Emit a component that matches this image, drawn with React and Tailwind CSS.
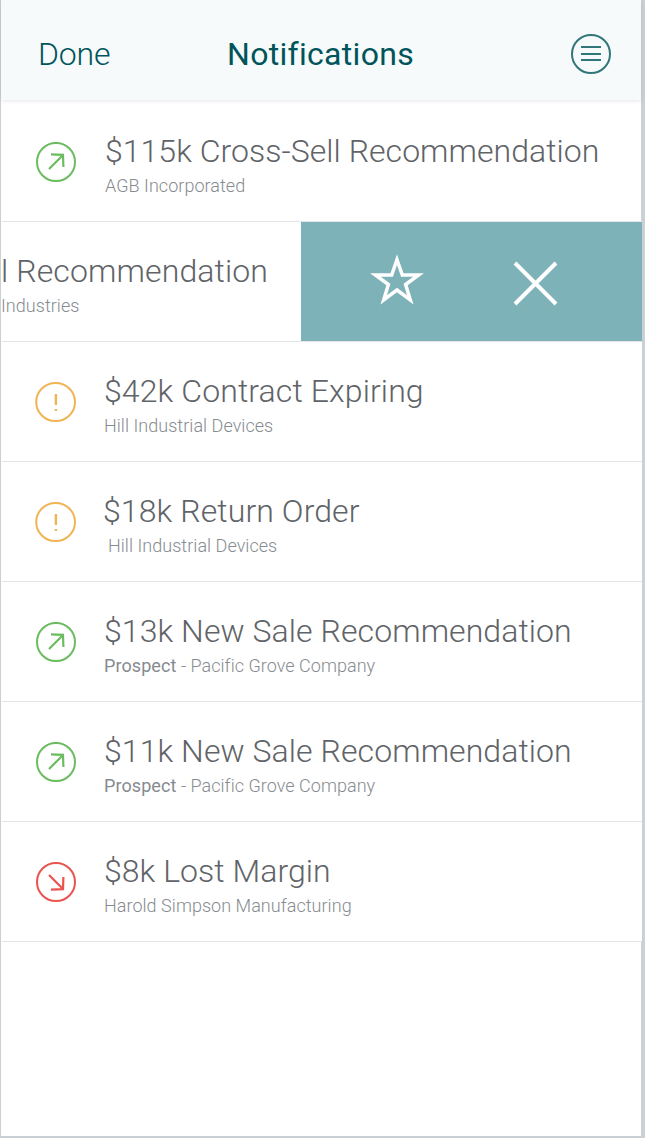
import React from "react";

const rows = [
  { icon: "up", title: "$115k Cross-Sell Recommendation", sub: "AGB Incorporated", pad: "pl-[103px]", track: "tracking-[0.04px]", bg: "bg-transparent" },
  { swiped: true, title: "l Recommendation", sub: "Industries", track: "tracking-[0.12px]" },
  { icon: "alert", title: "$42k Contract Expiring", sub: "Hill Industrial Devices", pad: "pl-[102px]", track: "tracking-[0.11px]" },
  { icon: "alert", title: "$18k Return Order", sub: "Hill Industrial Devices", pad: "pl-[101px]", subPad: "pl-[5px]", track: "tracking-[0.1px]" },
  { icon: "up", title: "$13k New Sale Recommendation", strong: "Prospect", sub: " - Pacific Grove Company", pad: "pl-[102px]", track: "tracking-[0.07px]" },
  { icon: "up", title: "$11k New Sale Recommendation", strong: "Prospect", sub: " - Pacific Grove Company", pad: "pl-[102px]", track: "tracking-[0.07px]" },
  { icon: "down", title: "$8k Lost Margin", sub: "Harold Simpson Manufacturing", pad: "pl-[102px]", track: "tracking-[0.05px]" },
];

function StatusIcon({ kind }) {
  if (kind === "alert") {
    return (
      <svg className="h-[42px] w-[42px] text-[#f0b454]" viewBox="0 0 42 42" fill="none" stroke="currentColor" strokeWidth="2">
        <ellipse cx="20.6" cy="21" rx="19.4" ry="19" />
        <path d="M20.9 13v11M20.9 28v2" strokeWidth="2.4" />
      </svg>
    );
  }
  const color = kind === "up" ? "text-[#6cbb61]" : "text-[#ea5450]";
  return (
    <svg className={`h-[42px] w-[42px] ${color}`} viewBox="0 0 42 42" fill="none" stroke="currentColor" strokeWidth="2">
      <circle cx="21" cy="21" r="19" />
      {kind === "up" ? (
        <path d="M14 28 27.8 14.2M16 13.3l12 .5.4 12.2" strokeWidth="2.2" />
      ) : (
        <path d="M14 14 27.8 27.8M16 28.7l12-.5.4-12.2" strokeWidth="2.2" />
      )}
    </svg>
  );
}

function Texts({ row }) {
  return (
    <div className="flex flex-col whitespace-pre pt-[29px]">
      <div className={`h-10 text-[32px] leading-10 font-light text-[#606367] ${row.track}`}>{row.title}</div>
      <div className={`mt-[3px] h-6 text-[18px] leading-6 font-light tracking-[0.04px] text-[#868b8f] ${row.subPad || ""}`}>
        {row.strong && <span className="font-normal tracking-[0.08px]">{row.strong}</span>}
        {row.sub}
      </div>
    </div>
  );
}

function Row({ row }) {
  if (row.swiped) {
    return (
      <li className="ml-px flex h-[120px] w-[640px] border-b border-[#e2e4e5] bg-white">
        <div className="w-[299px] overflow-hidden">
          <div className="-ml-px">
            <Texts row={row} />
          </div>
        </div>
        <div className="flex flex-1 bg-[#7db2b8]">
          <svg className="mt-[29px] ml-[67px] h-14 w-14" viewBox="0 0 56 56" fill="none" stroke="#fff" strokeWidth="3.5">
            <path d="m29 8.7 5.3 15.3h16.3L37.6 33.5l4.7 15.4L29 39l-13.3 9.9L20.4 33.5 7.4 24h16.3Z" />
          </svg>
          <svg className="mt-[37px] ml-[88px] h-12 w-12" viewBox="0 0 48 48" fill="none" stroke="#fff" strokeWidth="4">
            <path d="m3 4 41 41M44 4l-41 41" />
          </svg>
        </div>
      </li>
    );
  }
  return (
    <li className={`ml-px flex h-[120px] w-[640px] border-b border-[#e2e4e5] ${row.bg || "bg-white"}`}>
      <div className="mt-[39px] ml-[33px] -mr-[75px] w-[42px] shrink-0">
        <StatusIcon kind={row.icon} />
      </div>
      <div className={row.pad}>
        <Texts row={row} />
      </div>
    </li>
  );
}

export default function App() {
  return (
    <div className="h-[1138px] w-[645px] overflow-hidden bg-[#cbd0d4] pl-px font-['Roboto',sans-serif]">
      <main className="flex h-[1136px] w-[640px] flex-col bg-white">
        <header className="z-10 flex h-[100px] shrink-0 items-center bg-[#f6fafb] text-[#00545a] shadow-[0_1px_4px_rgba(0,0,0,0.1)]">
          <div className="w-[189px] pt-2 pl-[37px] text-[32px] leading-10 font-light tracking-[-0.2px]">Done</div>
          <h1 className="w-[261px] pt-2 text-center text-[32px] leading-10 font-[430] tracking-[0.3px] whitespace-nowrap">Notifications</h1>
          <svg className="mt-2 ml-[119px] h-[42px] w-[42px]" viewBox="0 0 42 42" fill="none" stroke="#31767b" strokeWidth="2">
            <circle cx="21" cy="21" r="19" />
            <path d="M11 14h20M11 21h20M11 27h20" />
          </svg>
        </header>
        <ul className="mt-[2px]">
          {rows.map((row, i) => (
            <Row key={i} row={row} />
          ))}
        </ul>
      </main>
    </div>
  );
}
